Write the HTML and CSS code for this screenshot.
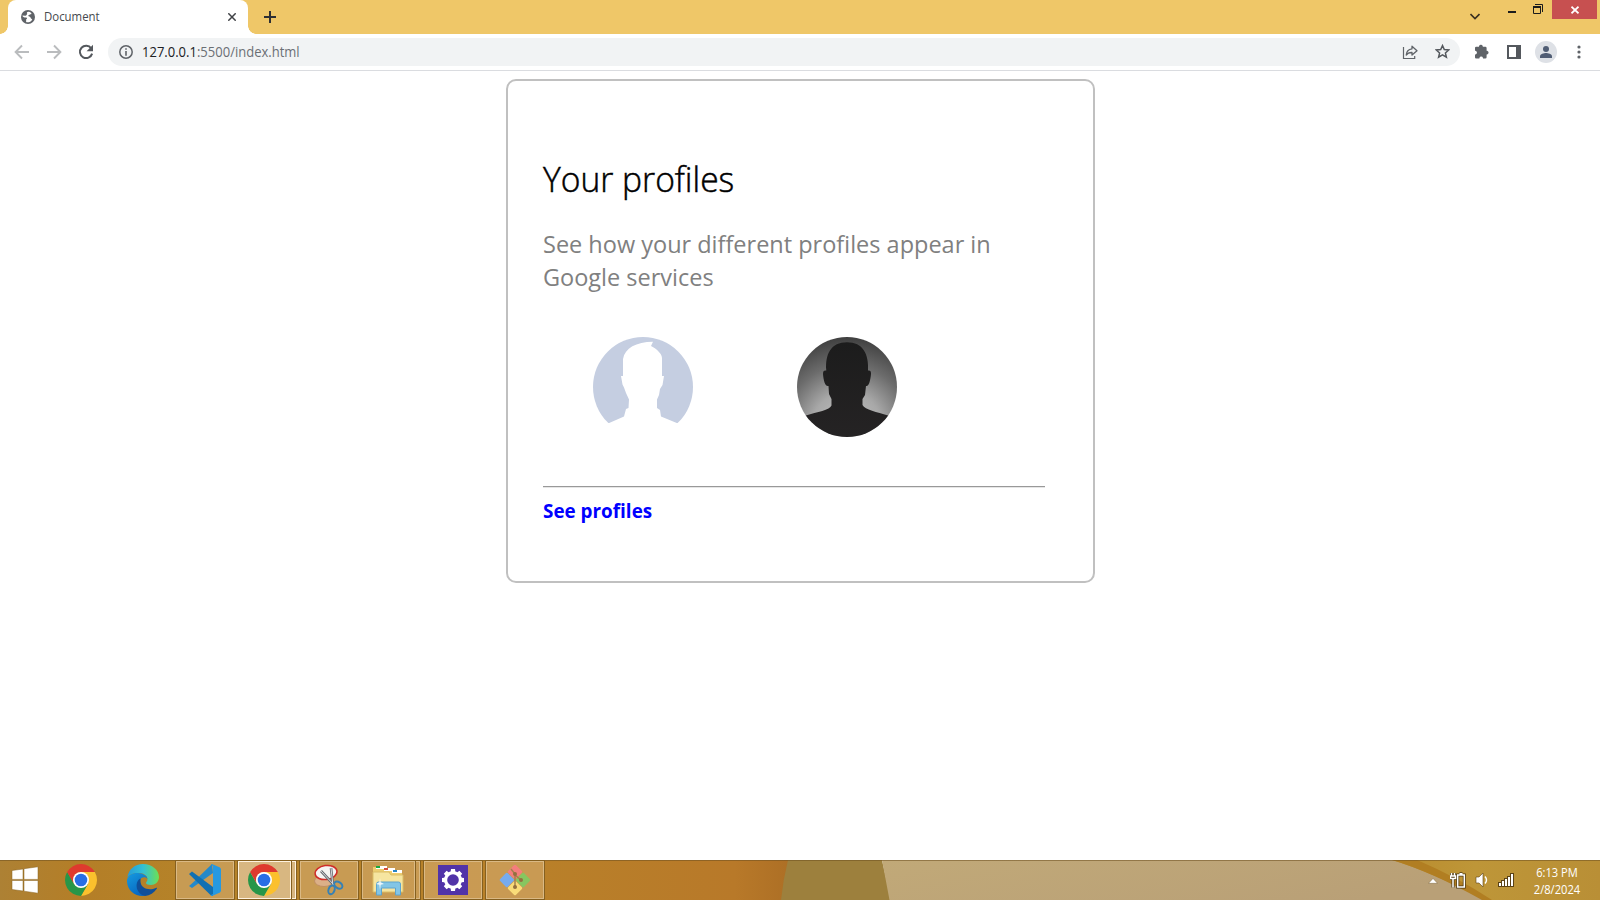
FILE: index.html
```html
<!DOCTYPE html>
<html lang="en">
<head>
<meta charset="utf-8">
<title>Document</title>
<link rel="stylesheet" href="styles.css">
</head>
<body>
<div class="tabstrip">
  <div class="tab">
    <svg class="globe" width="14" height="14" viewBox="0 0 14 14"><circle cx="7" cy="7" r="7" fill="#5f6368"/><path d="M7.5 1.8C5.8 2.2 5.4 3 6.3 3.8 5.5 4.7 5.6 5.6 4.4 5.8L1.5 5.4C1.6 7 2.8 7.4 5 7.5c1.4.2 1.4 1.3.2 1.8l-.1 2.8c2.2.8 5-.5 6.2-2.7L9.8 8.3c-.2-1.6-1.6-1.8-2.8-2.2 0-1 1.3-.8 1.7-1.7l1.8-.5C10.3 2.8 9 1.6 7.5 1.8Z" fill="#fff"/></svg>
    <span class="tab-title">Document</span>
    <svg class="tab-close" width="8" height="8" viewBox="0 0 8 8"><path d="M.3.3l7.400 7.400M7.700.3L.3 7.700" stroke="#404246" stroke-width="1.500"/></svg>
  </div>
  <svg class="newtab" width="12" height="12" viewBox="0 0 12 12"><path d="M6 0v12M0 6h12" stroke="#2d2f33" stroke-width="2"/></svg>
  <svg class="tabsearch" width="10" height="7" viewBox="0 0 10 7"><path d="M.5 1L5 5.500 9.500 1" fill="none" stroke="#3a3020" stroke-width="1.600"/></svg>
  <svg class="minimize" width="8" height="2" viewBox="0 0 8 2"><path d="M0 0h8v2H0z" fill="#1c1c1c"/></svg>
  <svg class="restore" width="10" height="10" viewBox="0 0 10 10"><path d="M2 .5h7.5V8M.5 3v6.5h7V3" fill="none" stroke="#1c1c1c"/><path d="M0 2h8v2H0z" fill="#1c1c1c"/></svg>
  <div class="close"><svg width="8" height="8" viewBox="0 0 8 8"><path d="M.5.7l7 6.600M7.500.7l-7 6.600" stroke="#fff" stroke-width="1.700"/></svg></div>
</div>
<div class="toolbar">
  <svg class="nav-icon" width="16" height="16" viewBox="0 0 16 16"><path d="M15 8H2M8 1.5L1.6 8 8 14.5" fill="none" stroke="#babcbe" stroke-width="1.9"/></svg>
  <svg class="nav-icon" width="16" height="16" viewBox="0 0 16 16"><path d="M1 8h13M8 1.5L14.4 8 8 14.5" fill="none" stroke="#babcbe" stroke-width="1.9"/></svg>
  <svg class="reload" width="16" height="16" viewBox="0 0 16 16"><path d="M13.2 4.3A6.2 6.2 0 1 0 14.1 9.6" fill="none" stroke="#54585d" stroke-width="2"/><path d="M15 .8v6.4H8.6z" fill="#54585d"/></svg>
  <div class="omnibox">
    <svg class="info" width="14" height="14" viewBox="0 0 14 14"><circle cx="7" cy="7" r="6.2" fill="none" stroke="#5f6368" stroke-width="1.5"/><path d="M6.2 3.2h1.6v1.6H6.2zM6.2 6.1h1.6v4.7H6.2z" fill="#5f6368"/></svg>
    <span class="url"><span class="host">127.0.0.1</span><span class="path">:5500/index.html</span></span>
    <svg class="share" width="16" height="16" viewBox="0 0 16 16"><path d="M1.5 3v11.5h11.2V12" fill="none" stroke="#5f6368" stroke-width="1.2"/><path d="M10 2.2l5 4.5-5 4.4V8.5C7.2 8.4 5.5 9.2 4.2 11c.3-3.6 2.4-5.8 5.8-6.2z" fill="none" stroke="#5f6368" stroke-width="1.3" stroke-linejoin="round"/></svg>
    <svg class="star" width="15" height="15" viewBox="0 0 15 15"><path d="M7.5 1.6l1.8 4 4.4.4-3.3 2.9 1 4.3-3.9-2.3-3.9 2.3 1-4.3L1.3 6l4.4-.4z" fill="none" stroke="#54585d" stroke-width="1.5"/></svg>
  </div>
  <svg class="puzzle" width="15" height="15" viewBox="0 0 15 15"><path d="M1 4a1.2 1.2 0 0 1 1.2-1.2H5V2.2a2 2 0 0 1 3.8 0v.6h2.6A1.3 1.3 0 0 1 12.6 4v2.7h.5a1.9 1.9 0 0 1 0 3.7h-.5v2.8a1.3 1.3 0 0 1-1.3 1.3H9v-.6a1.9 1.9 0 0 0-3.6 0v.6H2.2A1.2 1.2 0 0 1 1 13.200v-2.800h.5a1.900 1.900 0 0 0 0-3.700H1z" fill="#5f6368"/></svg>
  <svg class="panel" width="14" height="14" viewBox="0 0 14 14"><path d="M0 0h14v14H0zM2 2v10h7V2z" fill="#54585d" fill-rule="evenodd"/></svg>
  <svg class="user" width="22" height="22" viewBox="0 0 22 22"><circle cx="11" cy="11" r="11" fill="#dee1e6"/><circle cx="11" cy="8" r="3" fill="#505d74"/><path d="M5 17v-1.800c0-2.200 4-3.200 6-3.200s6 1 6 3.200V17z" fill="#505d74"/></svg>
  <svg class="dots" width="4" height="14" viewBox="0 0 4 14"><g fill="#5f6368"><circle cx="2" cy="2" r="1.600"/><circle cx="2" cy="7" r="1.600"/><circle cx="2" cy="12" r="1.600"/></g></svg>
</div>
<main class="page">
  <section class="card">
    <h1 class="title">Your profiles</h1>
    <p class="lead">See how your different profiles appear in<br>Google services</p>
    <div class="avatars">
      <svg class="avatar" width="100" height="100" viewBox="0 0 100 100">
        <defs><clipPath id="round"><circle cx="50" cy="50" r="50"/></clipPath></defs>
        <g clip-path="url(#round)"><path d="M0 0h100v86H0z" fill="#c5cee1"/><path d="M15 86.500L31 79.500 33 72 35.500 71 36 62.500 33 56 31 50.500 29.500 47.500 28 39H30V22C32 11 43 5 60 4.800L58 9C64 12 69 17 69 21V39H71L69.500 48 67 52 66 58 64 62.500V71L67 73 68 79.500 85 86.500V100H15z" fill="#fff"/></g>
      </svg>
      <svg class="avatar" width="100" height="100" viewBox="0 0 100 100">
        <defs><radialGradient id="backdrop" cx=".5" cy=".9" r=".92"><stop offset="0" stop-color="#c4c4c4"/><stop offset=".38" stop-color="#a8a8a8"/><stop offset=".68" stop-color="#6c6c6c"/><stop offset="1" stop-color="#3c3c3c"/></radialGradient><linearGradient id="figure" x2="0" y2="1"><stop offset="0" stop-color="#1c1c1c"/><stop offset="1" stop-color="#252324"/></linearGradient></defs>
        <g clip-path="url(#round)"><path d="M0 0h100v100H0z" fill="url(#backdrop)"/><path d="M0 81L9 78.500C20 75 33 73 34.500 68.500V62L32 57 31.500 49C28 50 26.500 43 26 37c0-3 1-4 3.300-3.500C28 17 34 5.200 50 5.200S72 17 71 33.500c2-.5 3.200.5 3 3.500-.5 6-2.200 13-5 12L68 58l-2.500 4v6C68 73 80 75 91 78.500l9 2.500v19H0z" fill="url(#figure)"/></g>
      </svg>
    </div>
    <hr class="rule">
    <a class="link">See profiles</a>
  </section>
</main>
<footer class="taskbar">
  <svg class="wallpaper" width="1600" height="40" viewBox="0 0 1600 40" preserveAspectRatio="none">
    <defs>
      <linearGradient id="wood"><stop offset="0" stop-color="#ad8134"/><stop offset=".1" stop-color="#b47e27"/><stop offset=".25" stop-color="#b58329"/><stop offset=".65" stop-color="#b98129"/><stop offset=".93" stop-color="#b87929"/><stop offset="1" stop-color="#ad6f25"/></linearGradient>
      <linearGradient id="sand" x2="1" y2=".3"><stop offset="0" stop-color="#c1a978"/><stop offset="1" stop-color="#b9a077"/></linearGradient>
      <linearGradient id="gold"><stop offset="0" stop-color="#b98c2e"/><stop offset=".4" stop-color="#be9638"/><stop offset="1" stop-color="#b98f36"/></linearGradient>
    </defs>
    <path d="M0 0h790v40H0z" fill="url(#wood)"/>
    <path d="M788 0Q783 20 781 40h110L882 0z" fill="#9d803d"/>
    <path d="M882 0h520l88 40H889.500z" fill="url(#sand)"/>
    <path d="M1392 0h208v40h-116Q1432 12 1392 0z" fill="url(#gold)"/>
    <path d="M1392 0h25q40 17 75 40h-10Q1432 12 1392 0z" fill="#b17e22"/>
    <path d="M0 0h1600v1H0z" fill="#6d5020" opacity=".55"/>
  </svg>
  <div class="launch launch-start"><svg width="28" height="28" viewBox="0 0 28 28"><path d="M1 4.500L12 3v10.400H1zM13 2.700L27 .8v12.600H13zM1 14.500h11V25L1 23.500zM13 14.500h14v12.700l-14-2z" fill="#fff" stroke="#86601f" stroke-width=".5"/></svg></div>
  <div class="launch"><svg width="32" height="32" viewBox="0 0 32 32"><g id="chrome"><path d="M29.850 8A16 16 0 0 1 16 32L22.930 20 24 16 16 8z" fill="#fbc02d"/><path d="M2.150 8A16 16 0 0 0 16 32L22.930 20 16 24 9.070 20z" fill="#279648"/><path d="M2.150 8A16 16 0 0 1 29.850 8H16A8 8 0 0 0 9.070 20z" fill="#df3a2e"/><circle cx="16" cy="16" r="8" fill="#fff"/><circle cx="16" cy="16" r="6.300" fill="#286ee5"/></g></svg></div>
  <div class="launch"><svg width="32" height="32" viewBox="0 0 32 32">
    <defs><linearGradient id="edge-top"><stop offset="0" stop-color="#249bd9"/><stop offset=".5" stop-color="#33c0d5"/><stop offset="1" stop-color="#6ee052"/></linearGradient><linearGradient id="edge-side" x2=".6" y2="1"><stop offset="0" stop-color="#159be0"/><stop offset="1" stop-color="#0866c0"/></linearGradient></defs>
    <path d="M.3 14C1.500 5 8 0 16 0c9 0 16 6 16 13 0 5-4 8-8 8-3 0-5-1-5-2 0-1 1.500-1.500 1.500-4C20.500 12 17 9 12 9 6 9 1.500 11 .3 14z" fill="url(#edge-top)"/>
    <path d="M0 16C1 11 6 8.500 11 9c5 .2 9.300 3 9.500 6-1-2-4-2.500-6-1-4 3-4 13 3.500 17.800C8 33-.5 26 0 16z" fill="url(#edge-side)"/>
    <path d="M13.500 14.500C8 17 7.500 29 18 31.900c5-.5 9-3 11.800-7.200.5-.8-.2-1.200-1-.8-6 3-15 1-15.300-6.400z" fill="#104f99"/>
  </svg></div>
  <div class="task task-code"><svg width="32" height="32" viewBox="0 0 32 32"><path d="M23 0L3 19.500 0 22l3 2 21-15z" fill="#2489ca"/><path d="M0 10l3-2.500L24 23v9h-1.500z" fill="#1070b3"/><path d="M23 0l8 3.500 1 1.500v22l-1 1.500-8 3.500c-1 0-1.500-.5-1-1l2-1V2l-2-1z" fill="#2699e0"/></svg></div>
  <div class="task task-active"><svg width="32" height="32" viewBox="0 0 32 32"><use href="#chrome"/></svg></div>
  <div class="stack stack-active"></div>
  <div class="task"><svg width="32" height="32" viewBox="0 0 32 32"><ellipse cx="11" cy="17" rx="9.500" ry="5.500" fill="#dcb088" stroke="#c08f62"/><ellipse cx="13" cy="8.500" rx="11" ry="7" fill="#f5f4f2" stroke="#cf2c28" stroke-width="1.500" transform="rotate(-8 13 8)"/><path d="M8 7l13 14M18 4l2 18" stroke="#686a70" stroke-width="2.600"/><path d="M8 7l13 14M18 4l2 18" stroke="#d6d9dd" stroke-width="1"/><ellipse cx="25.500" cy="21.500" rx="4.500" ry="3" fill="none" stroke="#3581b5" stroke-width="2" transform="rotate(35 26 21)"/><ellipse cx="18.500" cy="26" rx="3" ry="4.500" fill="none" stroke="#3581b5" stroke-width="2" transform="rotate(20 19 26)"/></svg></div>
  <div class="task task-files"><svg width="32" height="32" viewBox="0 0 32 32"><path d="M1 6V3h11l1 2h9l1 3h7v18H1z" fill="#edce70"/><path d="M4 2h11v3H4z" fill="#fff"/><path d="M4 2h4v2H4z" fill="#19a940"/><path d="M12 4h11v3H12z" fill="#fff"/><path d="M12 4h4v2h-4z" fill="#d34c3b"/><path d="M20 6h10v3H20z" fill="#fff"/><path d="M21 6h4v2h-4z" fill="#2785c6"/><path d="M1 8h16l2 3h12v17H1z" fill="#f6e5a0" stroke="#dabd67"/><path d="M4.500 31V20q0-2 2-2h20q2 0 2 2v11h-5v-7h-14v7z" fill="#83c5e5" stroke="#5ea4cd"/><path d="M8 14l.7 4.300L12 20l-3.300.7L8 26l-.7-5.300L4 20l3.300-1.700z" fill="#fff" opacity=".85"/></svg></div>
  <div class="stack"></div>
  <div class="task"><svg width="30" height="30" viewBox="0 0 30 30"><path d="M0 0h30v30H0z" fill="#5133a8"/><g fill="#fff"><circle cx="15" cy="15" r="9"/><g id="teeth"><path d="M13 4h4l.5 4h-5zM13 26h4l.5-4h-5z"/><path d="M13 4h4l.5 4h-5zM13 26h4l.5-4h-5z" transform="rotate(45 15 15)"/></g><use href="#teeth" transform="rotate(90 15 15)"/></g><circle cx="15" cy="15" r="5.800" fill="#5133a8"/></svg></div>
  <div class="task"><svg width="32" height="32" viewBox="0 0 32 32"><g transform="rotate(45 16 16)"><rect x="4.800" y="4.800" width="10.900" height="10.900" rx="1.500" fill="#f47e7c"/><rect x="16.300" y="4.800" width="10.900" height="10.900" rx="1.500" fill="#87c660"/><rect x="4.800" y="16.300" width="10.900" height="10.900" rx="1.500" fill="#76abef"/><rect x="16.300" y="16.300" width="10.900" height="10.900" rx="1.500" fill="#f9dc79"/></g><path d="M12 5l4 5v13M16 11l6 5" fill="none" stroke="#a5814c" stroke-width="1.500"/><g fill="#94703f"><circle cx="16" cy="10" r="2"/><circle cx="22" cy="16" r="2"/><circle cx="16" cy="23" r="2"/></g></svg></div>
  <div class="tray">
    <svg class="tray-up" width="10" height="6" viewBox="0 0 10 6"><path d="M.5 5.300L5 .5l4.500 4.800z" fill="#fff" stroke="#6a4f20" stroke-width=".4"/></svg>
    <svg class="tray-power" width="17" height="17" viewBox="0 0 17 17"><path d="M1.500 1v3M4.500 1v3M.5 4h5v2.500h-5zM3 6v9.500M7.700 3h6.600v12H7.700zM9.500 1.700h3" fill="none" stroke="#4c3812" stroke-width="3"/><path d="M1.500 1v3M4.500 1v3M.5 4h5v2.500h-5zM3 6v9.500M7.700 3h6.600v12H7.700zM9.500 1.700h3" fill="none" stroke="#fff" stroke-width="1.500"/></svg>
    <svg class="tray-sound" width="14" height="16" viewBox="0 0 14 16"><path d="M1 5h3l4-4v14l-4-4H1z" fill="#fff" stroke="#5a4215" stroke-width=".6"/><path d="M10 4.500q3 3.500 0 7" fill="none" stroke="#fff" stroke-width="1.400"/></svg>
    <svg class="tray-signal" width="17" height="14" viewBox="0 0 17 14"><path d="M0 9h3V7h3V5h3V3h3V0h4v14H0z" fill="#5a4215"/><path d="M1 10h2v3H1zM4 8h2v5H4zM7 6h2v7H7zM10 4h2v9h-2zM13 1h2v12h-2z" fill="#fff"/></svg>
    <div class="clock"><span class="time">6:13 PM</span><span class="date">2/8/2024</span></div>
  </div>
</footer>
</body>
</html>
```
FILE: styles.css
```css
* { box-sizing: border-box; }
body {
  margin: 0;
  width: 1600px;
  height: 900px;
  overflow: hidden;
  display: flex;
  flex-direction: column;
  background: #fff;
  font-family: "Open Sans", "Noto Sans", sans-serif;
}
svg { display: block; flex: none; }
span { white-space: nowrap; }

.tabstrip { height: 34px; flex: none; display: flex; align-items: flex-start; padding-left: 8px; background: #efc768; }
.tab { position: relative; width: 240px; height: 34px; display: flex; align-items: center; padding: 0 12px 0 13px; background: #fff; border-radius: 8px 8px 0 0; }
.tab::before, .tab::after { content: ""; position: absolute; bottom: 0; width: 8px; height: 8px; }
.tab::before { left: -8px; background: radial-gradient(circle at 0 0, transparent 7.5px, #fff 8px); }
.tab::after { right: -8px; background: radial-gradient(circle at 100% 0, transparent 7.5px, #fff 8px); }
.tab-title { margin-left: 9px; padding-bottom: 1px; font-size: 12px; color: #45494d; transform: scaleX(.95); transform-origin: 0 50%; }
.tab-close { margin-left: auto; }
.newtab { margin: 11px 0 0 16px; }
.tabsearch { margin: 13px 0 0 auto; }
.minimize { margin: 11px 0 0 28px; }
.restore { margin: 4px 0 0 17px; }
.close { width: 45px; height: 19px; margin: 0 3px 0 9px; display: grid; place-items: center; background: #c75050; }

.toolbar { height: 37px; flex: none; display: flex; align-items: center; padding: 0 19px 1px 14px; background: #fff; border-bottom: 1px solid #dadce0; }
.nav-icon { margin-right: 16px; }
.reload { margin-right: 14px; }
.omnibox { width: 1352px; height: 28px; display: flex; align-items: center; padding: 0 10px 0 11px; border-radius: 14px; background: #f1f3f4; }
.url { margin-left: 9px; font-size: 14px; transform: scaleX(.93); transform-origin: 0 50%; }
.host { color: #202124; }
.path { color: #6b6f74; }
.share { margin: 0 17px 0 auto; }
.puzzle { margin-left: 14px; }
.panel { margin-left: 18px; }
.user { margin-left: 14px; }
.dots { margin-left: 20px; }

.page { flex: 1; display: flex; justify-content: center; align-items: flex-start; padding-top: 8px; }
.card { width: 589px; height: 504px; padding: 73px 48px 0 35px; border: 2px solid #c0c0c0; border-radius: 10px; }
.title { margin: 0; height: 50px; line-height: 50px; font-size: 35px; font-weight: 300; -webkit-text-stroke: .5px #000; color: #000; white-space: nowrap; transform: scaleX(.96); transform-origin: 0 50%; }
.lead { margin: 23px 0 0; font-size: 24.5px; line-height: 33px; color: #808080; white-space: nowrap; transform: scaleX(.959); transform-origin: 0 50%; }
.avatars { display: flex; gap: 104px; margin: 44px 0 0 50px; }
.rule { margin: 49px 0 0; height: 2px; border: 0; border-top: 1px solid #999; border-bottom: 1px solid #e6e6e6; }
.link { display: block; margin-top: 9px; font-size: 19.5px; line-height: 28px; font-weight: 700; color: #00f; transform: scaleX(.968); transform-origin: 0 50%; }

.taskbar { position: relative; height: 40px; flex: none; display: flex; }
.wallpaper { position: absolute; inset: 0; z-index: -1; }
.launch { width: 62px; height: 40px; display: grid; place-items: center; }
.launch-start { width: 50px; }
.task { width: 58px; height: 38px; margin: 1px 0 0 4px; display: grid; place-items: center; border: 1px solid #dab984; outline: 1px solid #856020; background: rgba(218, 180, 125, .5); }
.task-code { margin-left: 2px; }
.task-active { width: 53px; padding-right: 1px; border-color: #fff3df; background: rgba(228, 204, 164, .72); }
.task-files { width: 53px; padding-right: 1px; }
.stack { width: 4px; height: 38px; margin: 1px 0 0 1px; border: 1px solid #dab984; border-left: 0; background: rgba(218, 180, 125, .5); outline: 1px solid #856020; }
.stack-active { border-color: #fff3df; background: rgba(228, 204, 164, .72); }
.tray { margin-left: auto; display: flex; align-items: center; padding-right: 14px; }
.tray-up { margin-top: 2px; }
.tray-power { margin-left: 12px; }
.tray-sound { margin-left: 8px; }
.tray-signal { margin-left: 9px; }
.clock { width: 58px; margin-left: 13px; display: flex; flex-direction: column; align-items: center; padding-top: 2px; font-size: 12px; line-height: 17px; color: #fff; transform: scaleX(.93); }
```
